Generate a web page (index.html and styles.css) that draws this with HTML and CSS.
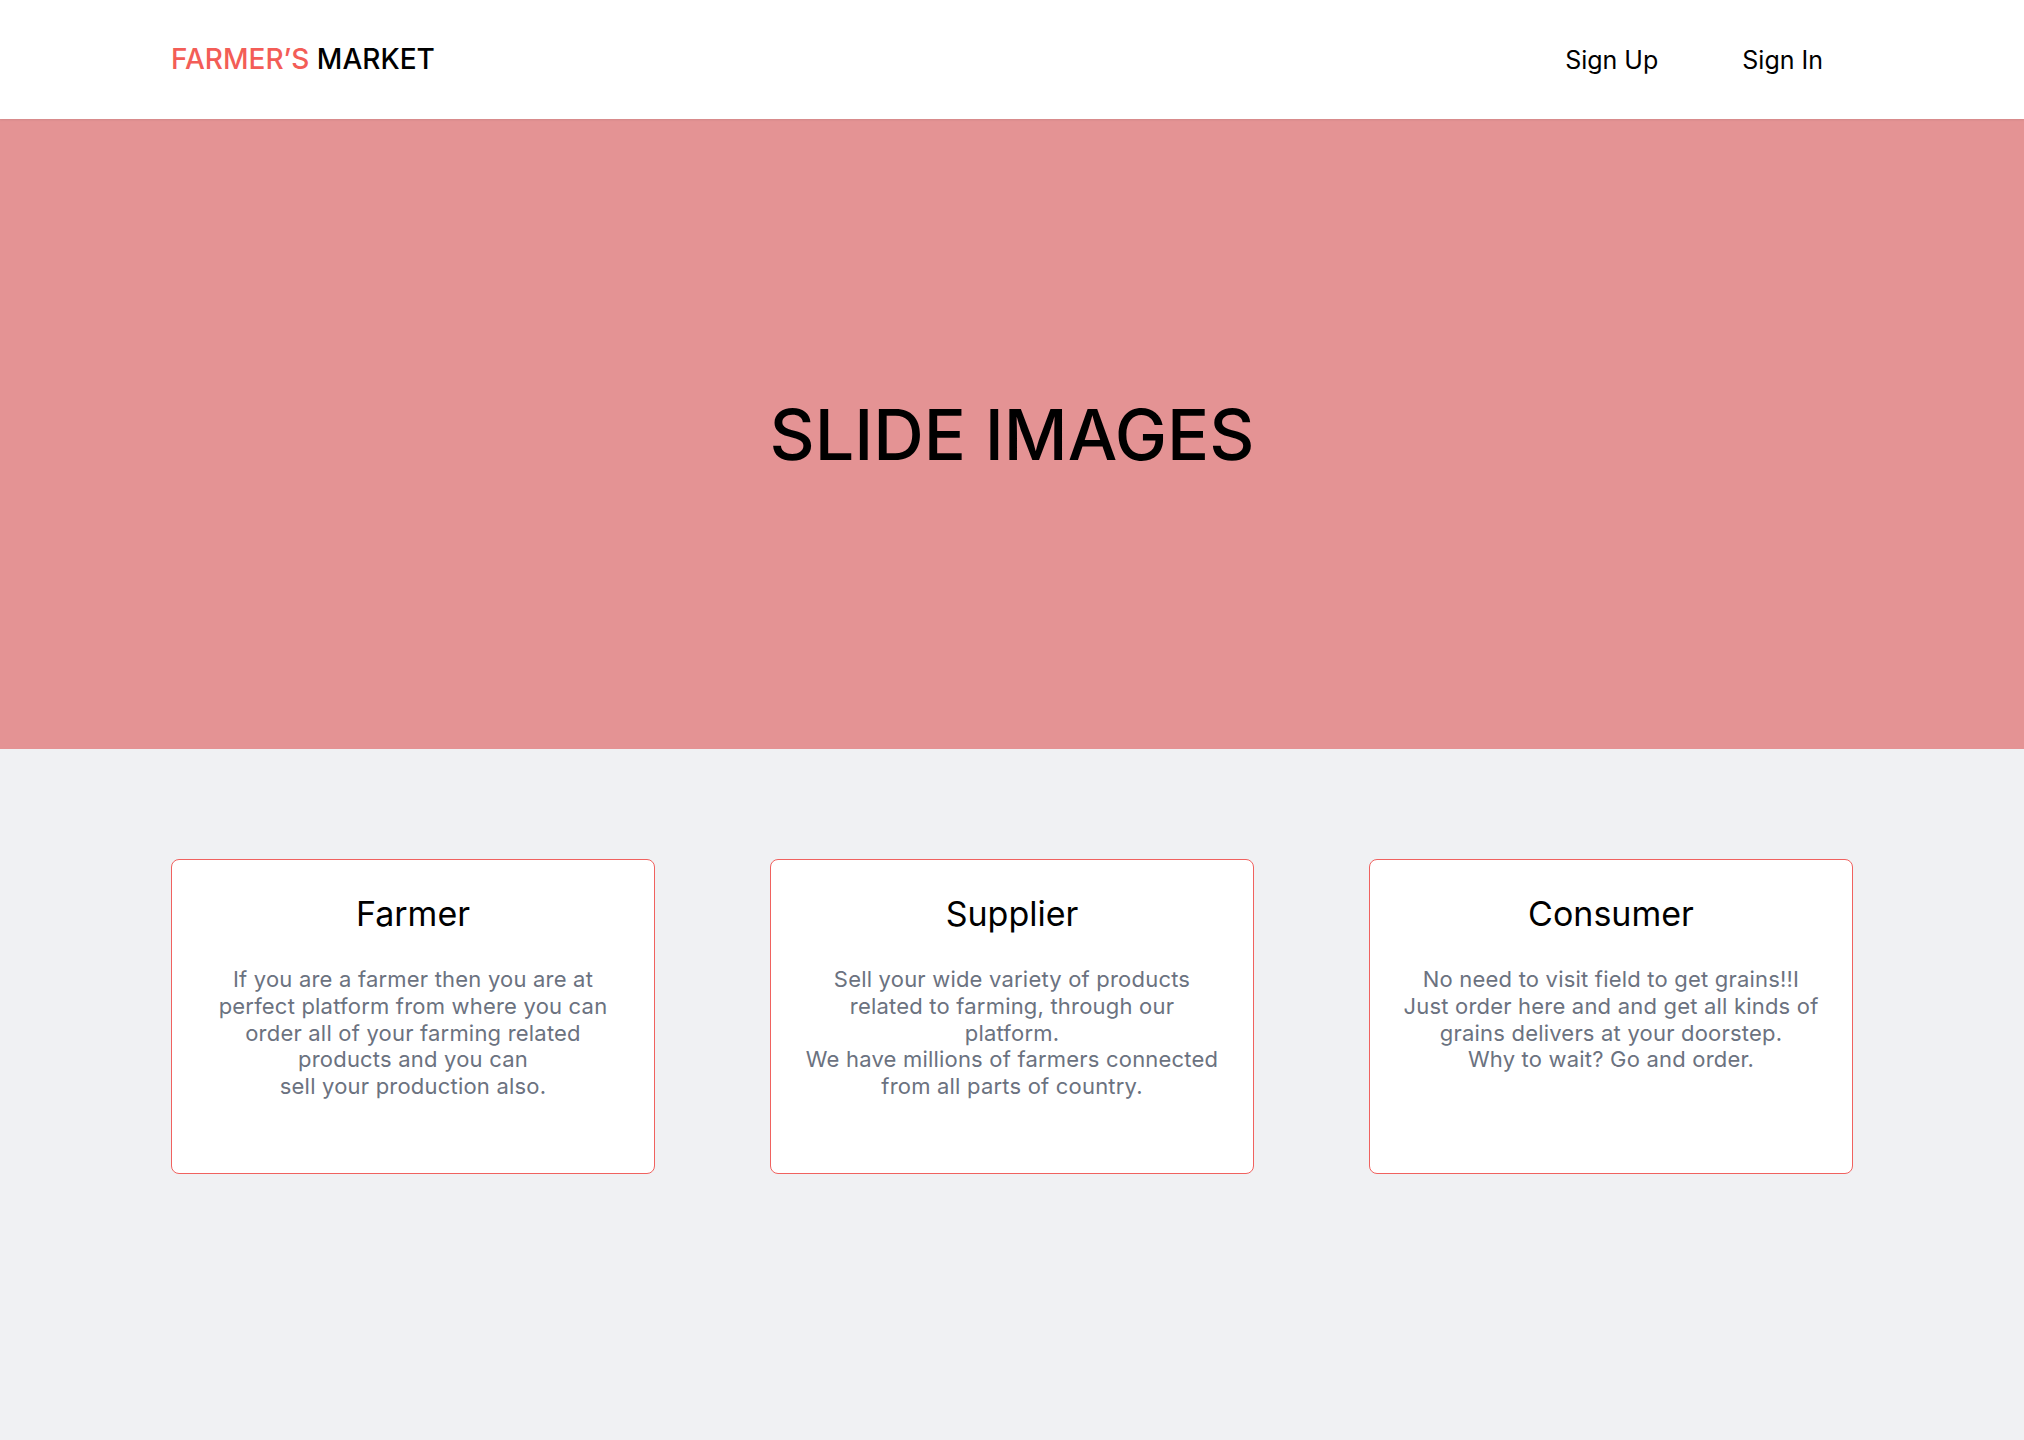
FILE: index.html
```html
<!DOCTYPE html>
<html lang="en">
<head>
<meta charset="utf-8">
<title>Farmer's Market</title>
<link rel="stylesheet" href="styles.css">
</head>
<body>
<header class="topbar">
  <div class="topbar-inner">
    <a class="logo" href="#"><span class="logo-accent">FARMER’S</span> MARKET</a>
    <nav class="nav">
      <a class="nav-link" href="#">Sign Up</a>
      <a class="nav-link" href="#">Sign In</a>
    </nav>
  </div>
</header>
<section class="hero">
  <h1 class="hero-title">SLIDE IMAGES</h1>
</section>
<main class="roles">
  <div class="cards">
    <div class="card card-first">
      <h2 class="card-title">Farmer</h2>
      <p class="card-text">If you are a farmer then you are at perfect platform from where you can order all of your farming related products and you can<br>sell your production also.</p>
    </div>
    <div class="card">
      <h2 class="card-title">Supplier</h2>
      <p class="card-text">Sell your wide variety of products related to farming, through our platform.<br>We have millions of farmers connected from all parts of country.</p>
    </div>
    <div class="card">
      <h2 class="card-title">Consumer</h2>
      <p class="card-text">No need to visit field to get grains!!I<br>Just order here and and get all kinds of grains delivers at your doorstep.<br>Why to wait? Go and order.</p>
    </div>
  </div>
</main>
</body>
</html>
```
FILE: styles.css
```css
* { box-sizing: border-box; }
html, body { margin: 0; padding: 0; }
body {
  font-family: Inter, "Noto Sans", sans-serif;
  background: #f0f1f3;
  color: #000;
  min-height: 1440px;
}
a { text-decoration: none; color: inherit; }

.topbar {
  background: #fff;
  height: 119px;
  box-shadow: 0 1px 2px rgba(0,0,0,0.08);
  position: relative;
  z-index: 1;
}
.topbar-inner {
  width: 1682px;
  margin: 0 auto;
  height: 100%;
  display: flex;
  align-items: center;
  justify-content: space-between;
}
.logo {
  font-size: 28px;
  font-weight: 500;
  color: #000;
  margin-top: -1px;
}
.logo-accent { color: #f35d57; }
.nav { display: flex; gap: 24px; }
.nav-link {
  font-size: 25px;
  padding: 0 30px;
  color: #000;
}

.hero {
  background: #e49394;
  height: 630px;
  display: flex;
  align-items: center;
  justify-content: center;
}
.hero-title {
  margin: 0;
  font-size: 70px;
  font-weight: 500;
}

.roles { padding: 110px 0 0; }
.cards {
  width: 1682px;
  margin: 0 auto;
  display: grid;
  grid-template-columns: repeat(3, 484px);
  justify-content: space-between;
}
.card {
  background: #fff;
  border: 1px solid #f0625f;
  border-radius: 8px;
  padding: 34px 31px 73px;
  text-align: center;
}
.card-title {
  margin: 0;
  font-size: 34px;
  font-weight: 400;
  line-height: 40px;
}
.card-text {
  margin: 32px 0 0;
  font-size: 22px;
  line-height: 26.8px;
  letter-spacing: 0.2px;
  color: #6b7280;
}
```
